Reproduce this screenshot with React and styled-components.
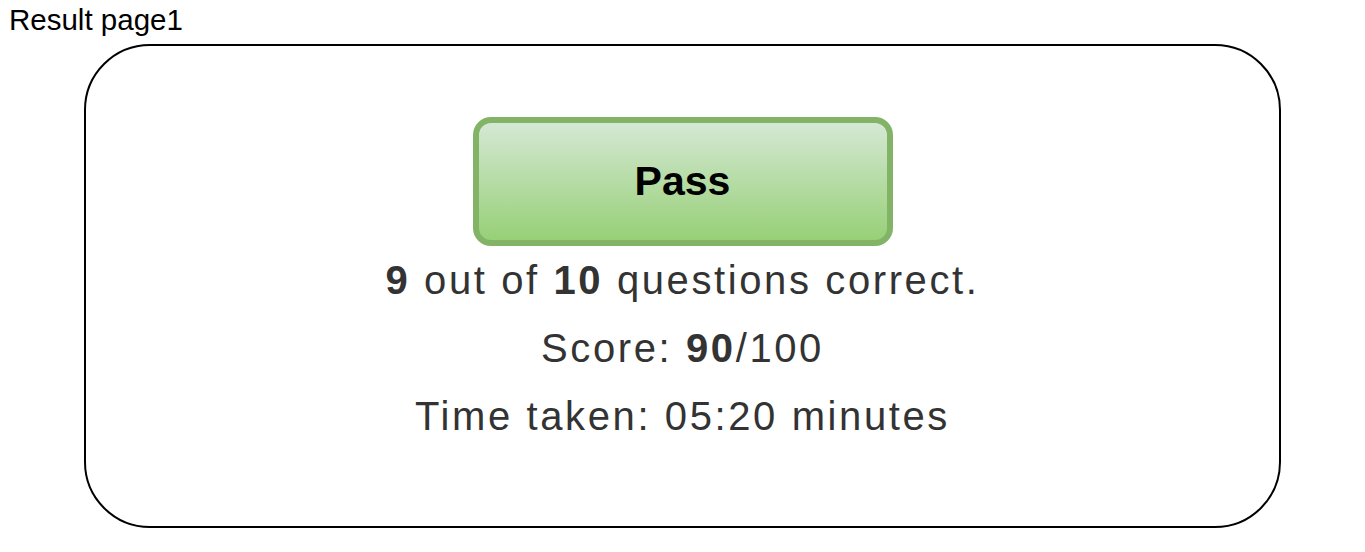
import React from 'react';
import styled, { createGlobalStyle } from 'styled-components';

const GlobalStyle = createGlobalStyle`
  body {
    margin: 0;
    background: #ffffff;
    font-family: "Liberation Sans", Arial, sans-serif;
  }
`;

const Page = styled.div`
  padding: 3px 0 0 9px;
  width: 1365px;
  box-sizing: border-box;
`;

const Title = styled.div`
  font-size: 29.5px;
  line-height: 34px;
  color: #000;
  height: 41px;
`;

const Card = styled.div`
  width: 1197px;
  height: 484px;
  box-sizing: border-box;
  margin-left: 75px;
  border: 2px solid #000;
  border-radius: 66px;
  display: flex;
  flex-direction: column;
  align-items: center;
  padding-top: 71px;
`;

const Badge = styled.div`
  width: 420px;
  height: 129px;
  box-sizing: border-box;
  border: 6.5px solid #82b366;
  border-radius: 18px;
  background: linear-gradient(to bottom, #d5e8d4, #97d077);
  display: flex;
  align-items: center;
  justify-content: center;
  font-family: "Liberation Sans", Arial, sans-serif;
  font-weight: 700;
  font-size: 41px;
  color: #000;
`;

const Lines = styled.div`
  margin-top: 0;
  display: flex;
  flex-direction: column;
  align-items: center;
`;

const Line = styled.div`
  font-family: "Liberation Sans", Arial, sans-serif;
  font-size: 40px;
  letter-spacing: 2.6px;
  color: #333;
  line-height: 68px;
  & > b {
    font-weight: 700;
  }
`;

export default function App() {
  return (
    <Page>
      <GlobalStyle />
      <Title>Result page1</Title>
      <Card>
        <Badge>Pass</Badge>
        <Lines>
          <Line><b>9</b> out of <b>10</b> questions correct.</Line>
          <Line>Score: <b>90</b>/100</Line>
          <Line>Time taken: 05:20 minutes</Line>
        </Lines>
      </Card>
    </Page>
  );
}
